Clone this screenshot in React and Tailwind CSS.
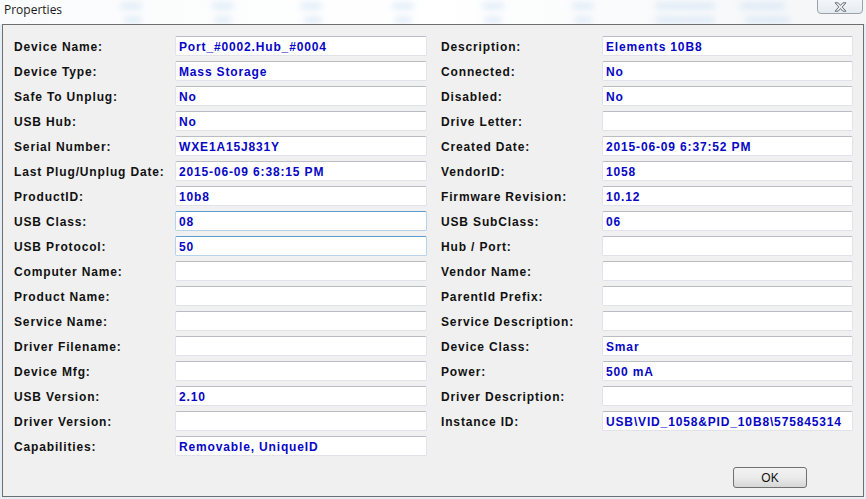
import React from "react";

const rows = [
  ["Device Name:", "Port_#0002.Hub_#0004", "Description:", "Elements 10B8"],
  ["Device Type:", "Mass Storage", "Connected:", "No"],
  ["Safe To Unplug:", "No", "Disabled:", "No"],
  ["USB Hub:", "No", "Drive Letter:", ""],
  ["Serial Number:", "WXE1A15J831Y", "Created Date:", "2015-06-09 6:37:52 PM"],
  ["Last Plug/Unplug Date:", "2015-06-09 6:38:15 PM", "VendorID:", "1058"],
  ["ProductID:", "10b8", "Firmware Revision:", "10.12"],
  ["USB Class:", "08", "USB SubClass:", "06", true],
  ["USB Protocol:", "50", "Hub / Port:", "", true],
  ["Computer Name:", "", "Vendor Name:", ""],
  ["Product Name:", "", "ParentId Prefix:", ""],
  ["Service Name:", "", "Service Description:", ""],
  ["Driver Filename:", "", "Device Class:", "Smar"],
  ["Device Mfg:", "", "Power:", "500 mA"],
  ["USB Version:", "2.10", "Driver Description:", ""],
  ["Driver Version:", "", "Instance ID:", "USB\\VID_1058&PID_10B8\\575845314"],
  ["Capabilities:", "Removable, UniqueID", null, null],
];

function Field({ value, width, focus }) {
  const border = focus
    ? "border-[#b5d3ea] border-t-[#5d9ccc]"
    : "border-[#e2e3ea] border-t-[#b9bcc3]";
  return (
    <div
      className={`h-[20px] ${width} shrink-0 bg-white border rounded-[2px] ${border} flex items-center pl-[3px] pt-[1px] overflow-hidden whitespace-nowrap text-[#0606c6]`}
    >
      {value}
    </div>
  );
}

function Label({ text }) {
  return <div className="w-[161px] shrink-0 whitespace-nowrap text-[#111] pt-[1px]">{text}</div>;
}

const blobs = [
  [120, 3, 22], [212, 3, 22], [300, 3, 22], [392, 3, 22], [482, 3, 22], [572, 3, 22],
  [124, 17, 18], [214, 17, 18], [304, 17, 18], [394, 17, 18], [484, 17, 18], [574, 17, 18],
  [655, 3, 60], [655, 17, 60], [740, 3, 45], [745, 17, 45],
];

export default function App() {
  return (
    <div
      className="w-[866px] h-[499px] overflow-hidden bg-[#e4eef7] relative"
      style={{ fontFamily: '"Liberation Sans", Arial, sans-serif' }}
    >
      <div className="h-[24px] relative bg-gradient-to-r from-[#fafbfc] via-[#ffffff] to-[#f4f6f8] overflow-hidden">
        {blobs.map(([x, y, w], i) => (
          <div
            key={i}
            className="absolute h-[6px] rounded-full bg-[#c9def3] blur-[3px] opacity-60"
            style={{ left: x, top: y, width: w }}
          />
        ))}
        <div
          className="absolute left-[4px] top-[3px] text-[12px] text-[#1a1a1a] leading-[14px]"
          style={{ fontFamily: '"Open Sans", "Noto Sans", sans-serif' }}
        >
          Properties
        </div>
        <div className="absolute left-[817px] top-[-3px] w-[46px] h-[17px] rounded-b-[4px] border border-[#9aa2ab] bg-gradient-to-b from-[#f6f8fa] to-[#e6ebf0] flex items-center justify-center pt-[2px]">
          <svg width="13" height="10" viewBox="0 0 13 10">
            <path
              d="M1 0.8 L4.2 0.8 L6.5 3.4 L8.8 0.8 L12 0.8 L8.2 5 L12 9.2 L8.8 9.2 L6.5 6.6 L4.2 9.2 L1 9.2 L4.8 5 Z"
              fill="#e9ecef"
              stroke="#5e6670"
              strokeWidth="0.9"
              strokeLinejoin="round"
            />
          </svg>
        </div>
      </div>
      <div className="ml-[2px] w-[862px] h-[473px] border border-[#6f6f6f] bg-[#f0f0f0] flex flex-col pt-[11px] pl-[11px] text-[12px] font-bold tracking-[0.85px]">
        <div className="flex flex-col gap-[5px]">
          {rows.map(([l1, v1, l2, v2, focus], i) => (
            <div key={i} className="flex items-center h-[20px]">
              <Label text={l1} />
              <Field value={v1} width="w-[252px]" focus={focus} />
              <div className="w-[14px] shrink-0" />
              {l2 !== null && (
                <>
                  <Label text={l2} />
                  <Field value={v2} width="w-[251px]" />
                </>
              )}
            </div>
          ))}
        </div>
        <div className="flex justify-end pr-[56px] mt-[11px]">
          <button
            className="w-[74px] h-[21px] rounded-[3px] border border-[#707070] bg-gradient-to-b from-[#f2f2f2] via-[#ebebeb] to-[#d6d6d6] text-[12px] font-normal tracking-normal text-[#111] flex items-center justify-center"
            style={{ fontFamily: '"Liberation Sans", Arial, sans-serif' }}
          >
            OK
          </button>
        </div>
      </div>
    </div>
  );
}
